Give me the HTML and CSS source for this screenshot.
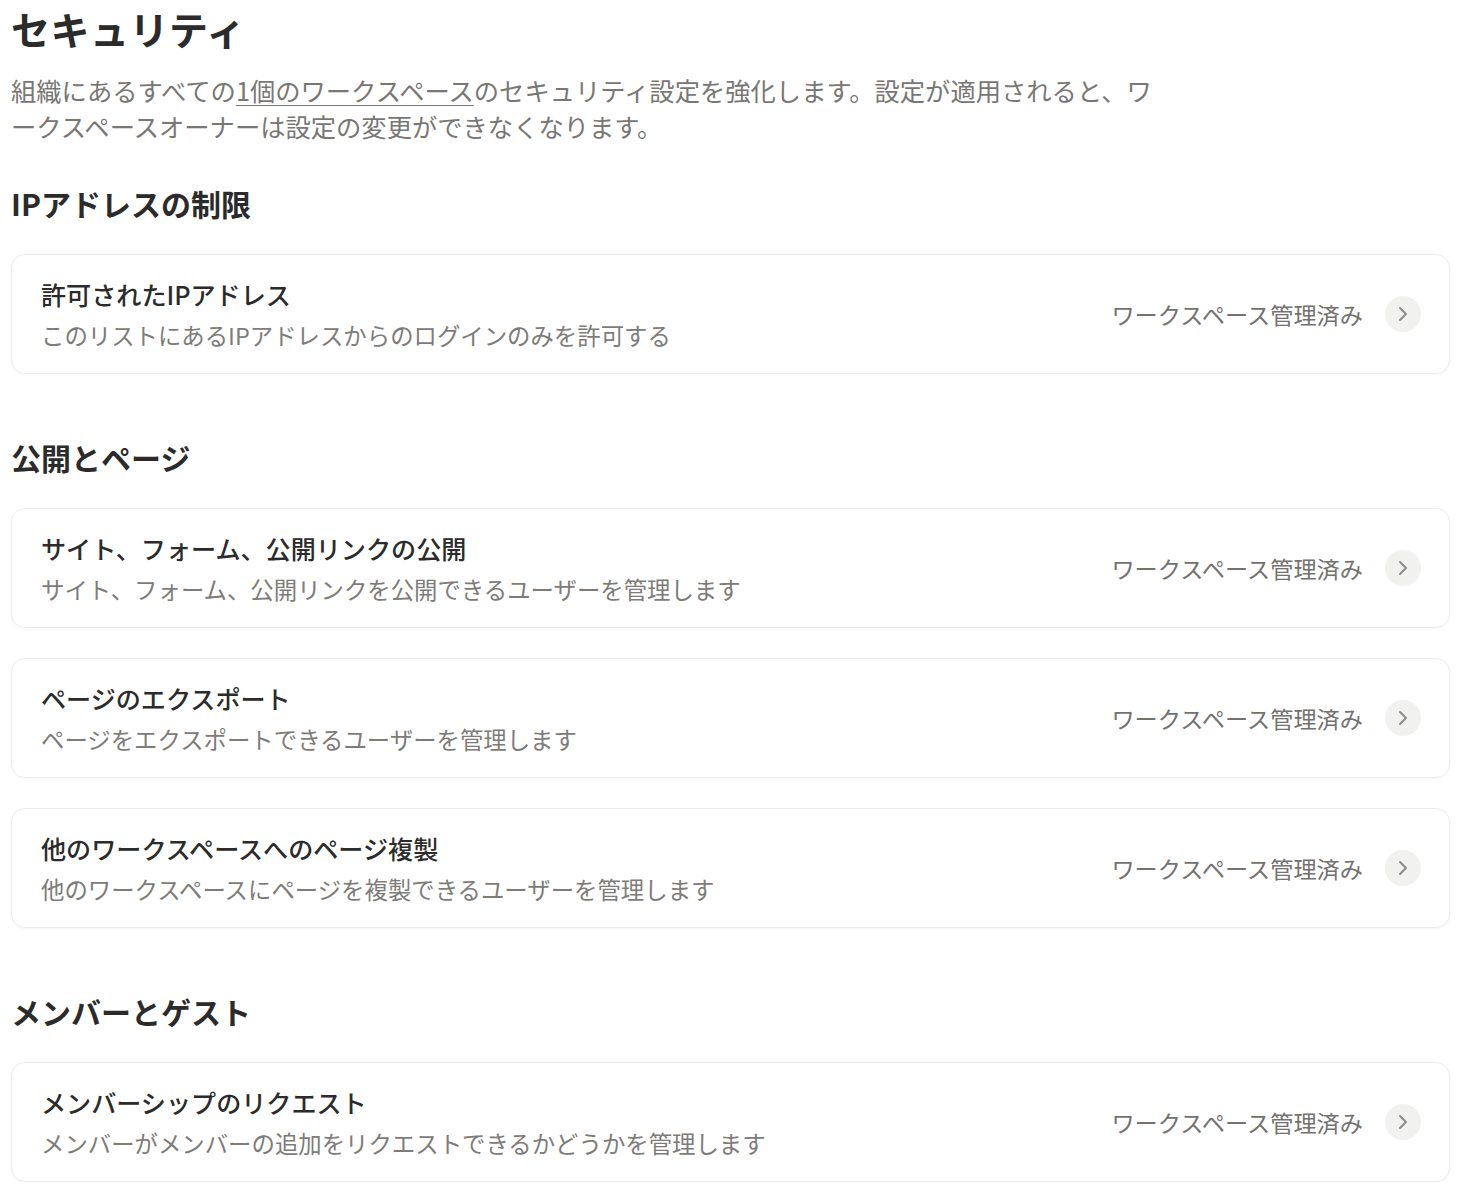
FILE: index.html
```html
<!DOCTYPE html>
<html lang="ja">
<head>
    <meta charset="UTF-8">
    <meta name="viewport" content="width=device-width, initial-scale=1.0">
    <title>セキュリティ</title>
    <link rel="stylesheet" href="styles.css">
</head>
<body>
    <div class="page">
        <h1 class="page-title">セキュリティ</h1>
        <p class="page-desc">組織にあるすべての<a href="#" class="link">1個のワークスペース</a>のセキュリティ設定を強化します。設定が適用されると、ワ<wbr>ークスペースオーナーは設定の変更ができなくなります。</p>

        <section class="section">
            <h2 class="section-title">IPアドレスの制限</h2>
            <div class="card">
                <div class="card-text">
                    <div class="card-title">許可されたIPアドレス</div>
                    <div class="card-sub">このリストにあるIPアドレスからのログインのみを許可する</div>
                </div>
                <div class="card-right">
                    <span class="managed">ワークスペース管理済み</span>
                    <span class="arrow"><svg width="10" height="16" viewBox="0 0 10 16"><path d="M2 2 L8 8 L2 14" fill="none" stroke="#8c8c8a" stroke-width="2" stroke-linecap="round" stroke-linejoin="round"/></svg></span>
                </div>
            </div>
        </section>

        <section class="section">
            <h2 class="section-title">公開とページ</h2>
            <div class="card">
                <div class="card-text">
                    <div class="card-title">サイト、フォーム、公開リンクの公開</div>
                    <div class="card-sub">サイト、フォーム、公開リンクを公開できるユーザーを管理します</div>
                </div>
                <div class="card-right">
                    <span class="managed">ワークスペース管理済み</span>
                    <span class="arrow"><svg width="10" height="16" viewBox="0 0 10 16"><path d="M2 2 L8 8 L2 14" fill="none" stroke="#8c8c8a" stroke-width="2" stroke-linecap="round" stroke-linejoin="round"/></svg></span>
                </div>
            </div>
            <div class="card">
                <div class="card-text">
                    <div class="card-title">ページのエクスポート</div>
                    <div class="card-sub">ページをエクスポートできるユーザーを管理します</div>
                </div>
                <div class="card-right">
                    <span class="managed">ワークスペース管理済み</span>
                    <span class="arrow"><svg width="10" height="16" viewBox="0 0 10 16"><path d="M2 2 L8 8 L2 14" fill="none" stroke="#8c8c8a" stroke-width="2" stroke-linecap="round" stroke-linejoin="round"/></svg></span>
                </div>
            </div>
            <div class="card">
                <div class="card-text">
                    <div class="card-title">他のワークスペースへのページ複製</div>
                    <div class="card-sub">他のワークスペースにページを複製できるユーザーを管理します</div>
                </div>
                <div class="card-right">
                    <span class="managed">ワークスペース管理済み</span>
                    <span class="arrow"><svg width="10" height="16" viewBox="0 0 10 16"><path d="M2 2 L8 8 L2 14" fill="none" stroke="#8c8c8a" stroke-width="2" stroke-linecap="round" stroke-linejoin="round"/></svg></span>
                </div>
            </div>
        </section>

        <section class="section">
            <h2 class="section-title">メンバーとゲスト</h2>
            <div class="card">
                <div class="card-text">
                    <div class="card-title">メンバーシップのリクエスト</div>
                    <div class="card-sub">メンバーがメンバーの追加をリクエストできるかどうかを管理します</div>
                </div>
                <div class="card-right">
                    <span class="managed">ワークスペース管理済み</span>
                    <span class="arrow"><svg width="10" height="16" viewBox="0 0 10 16"><path d="M2 2 L8 8 L2 14" fill="none" stroke="#8c8c8a" stroke-width="2" stroke-linecap="round" stroke-linejoin="round"/></svg></span>
                </div>
            </div>
        </section>
    </div>
</body>
</html>
```

FILE: styles.css
```css
body {
    margin: 0;
    background-color: #fff;
    color: #2f2f2f;
    font-family: "Noto Sans CJK JP", "Noto Sans", sans-serif;
}
.page {
    padding: 4px 11px 0 11px;
}
.page-title {
    margin: 0;
    font-size: 39px;
    line-height: 48px;
    letter-spacing: 0.5px;
    font-weight: 700;
    color: #2b2b2b;
}
.page-desc {
    margin: 20px 0 0 0;
    max-width: 1150px;
    font-size: 25.3px;
    line-height: 36px;
    color: #787774;
    line-break: loose;
}
.link {
    color: #787774;
    text-decoration: underline;
    text-underline-offset: 4px;
    text-decoration-thickness: 1px;
}
.section {
    margin-top: 63px;
}
.page-desc + .section {
    margin-top: 39px;
}
.section-title {
    margin: 0 0 31px 0;
    font-size: 30px;
    line-height: 40px;
    font-weight: 700;
    color: #2b2b2b;
}
.card {
    display: flex;
    align-items: center;
    justify-content: space-between;
    width: 1439px;
    box-sizing: border-box;
    padding: 22px 28px 22px 29px;
    border: 1px solid #ececea;
    border-radius: 14px;
    box-shadow: 0 1px 3px rgba(0,0,0,0.04);
    margin-bottom: 30px;
}
.section .card:last-child {
    margin-bottom: 0;
}
.card-title {
    font-size: 25.1px;
    line-height: 34px;
    font-weight: 500;
    color: #2b2b2b;
}
.card-sub {
    margin-top: 8px;
    font-size: 23.4px;
    line-height: 32px;
    color: #7d7c79;
}
.card-right {
    display: flex;
    align-items: center;
    gap: 22px;
}
.managed {
    font-size: 23.2px;
    line-height: 32px;
    color: #73726f;
}
.arrow {
    width: 36px;
    height: 36px;
    border-radius: 50%;
    background-color: #f1f1ef;
    display: flex;
    align-items: center;
    justify-content: center;
}
```
